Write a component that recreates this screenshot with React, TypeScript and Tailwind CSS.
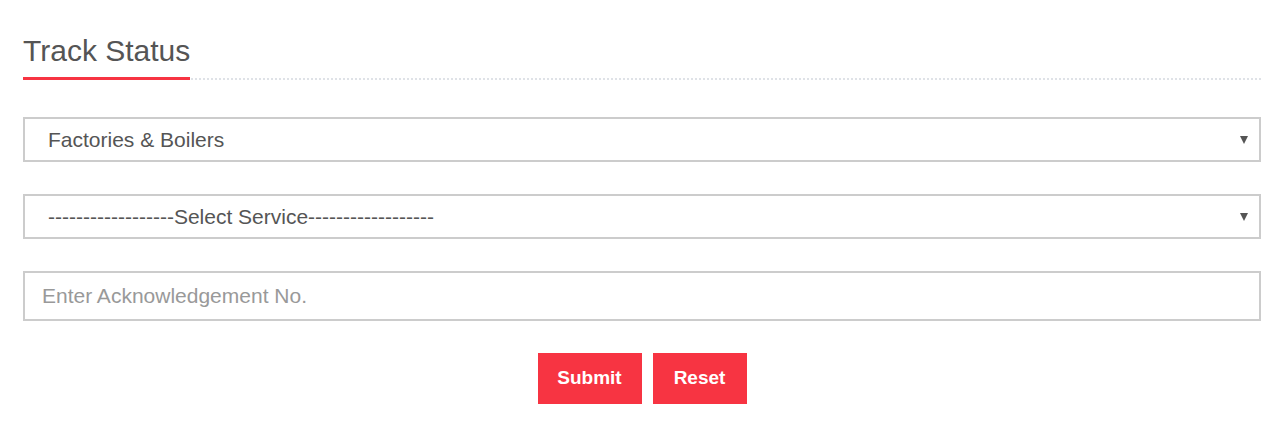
import React, { useState } from 'react';

const FONT = { fontFamily: '"Liberation Sans", Arial, Helvetica, sans-serif' };

const DEPARTMENTS = ['Factories & Boilers', 'Labour', 'Industries', 'Pollution Control'];
const SERVICES = ['------------------Select Service------------------'];

function Caret() {
  return (
    <svg
      className="pointer-events-none absolute right-[13px] top-1/2 -translate-y-1/2"
      width="8"
      height="9"
      viewBox="0 0 8 9"
    >
      <path d="M0 0.5 H8 L4 8.5 Z" fill="#555" />
    </svg>
  );
}

function SelectBox({ options, value, onChange }: { options: string[]; value: string; onChange: (v: string) => void }) {
  return (
    <div className="relative">
      <select
        value={value}
        onChange={(e) => onChange(e.target.value)}
        className="block h-[45px] w-full appearance-none rounded-none border-2 border-[#cccccc] bg-white pl-[23px] pr-8 text-[21px] text-[#555555] outline-none"
        style={FONT}
      >
        {options.map((o) => (
          <option key={o} value={o}>
            {o}
          </option>
        ))}
      </select>
      <Caret />
    </div>
  );
}

export default function App() {
  const [dept, setDept] = useState(DEPARTMENTS[0]);
  const [service, setService] = useState(SERVICES[0]);
  const [ack, setAck] = useState('');

  return (
    <div className="min-h-[423px] bg-white pl-[23px] pr-[6px] pt-[34px]" style={FONT}>
      {/* Section heading with red underline over dotted rule */}
      <div className="flex border-b-2 border-dotted border-[#dfe2e7]">
        <h1 className="-mb-[2px] border-b-[3px] border-[#f73442] pb-[9px] text-[30px] font-normal leading-[34px] text-[#555555]">
          Track Status
        </h1>
      </div>

      <form
        className="mt-[37px] flex flex-col gap-8"
        onSubmit={(e) => e.preventDefault()}
        onReset={() => {
          setDept(DEPARTMENTS[0]);
          setService(SERVICES[0]);
          setAck('');
        }}
      >
        <SelectBox options={DEPARTMENTS} value={dept} onChange={setDept} />
        <SelectBox options={SERVICES} value={service} onChange={setService} />

        <input
          type="text"
          value={ack}
          onChange={(e) => setAck(e.target.value)}
          placeholder="Enter Acknowledgement No."
          className="block h-[50px] w-full rounded-none border-2 border-[#cccccc] bg-white pl-[17px] text-[21px] text-[#555555] outline-none placeholder:text-[#999999]"
          style={FONT}
        />

        <div className="flex justify-center gap-[11px]">
          <button
            type="submit"
            className="h-[51px] w-[104px] bg-[#f73442] text-[19px] font-bold text-white"
            style={FONT}
          >
            Submit
          </button>
          <button
            type="reset"
            className="h-[51px] w-[94px] bg-[#f73442] text-[19px] font-bold text-white"
            style={FONT}
          >
            Reset
          </button>
        </div>
      </form>
    </div>
  );
}
